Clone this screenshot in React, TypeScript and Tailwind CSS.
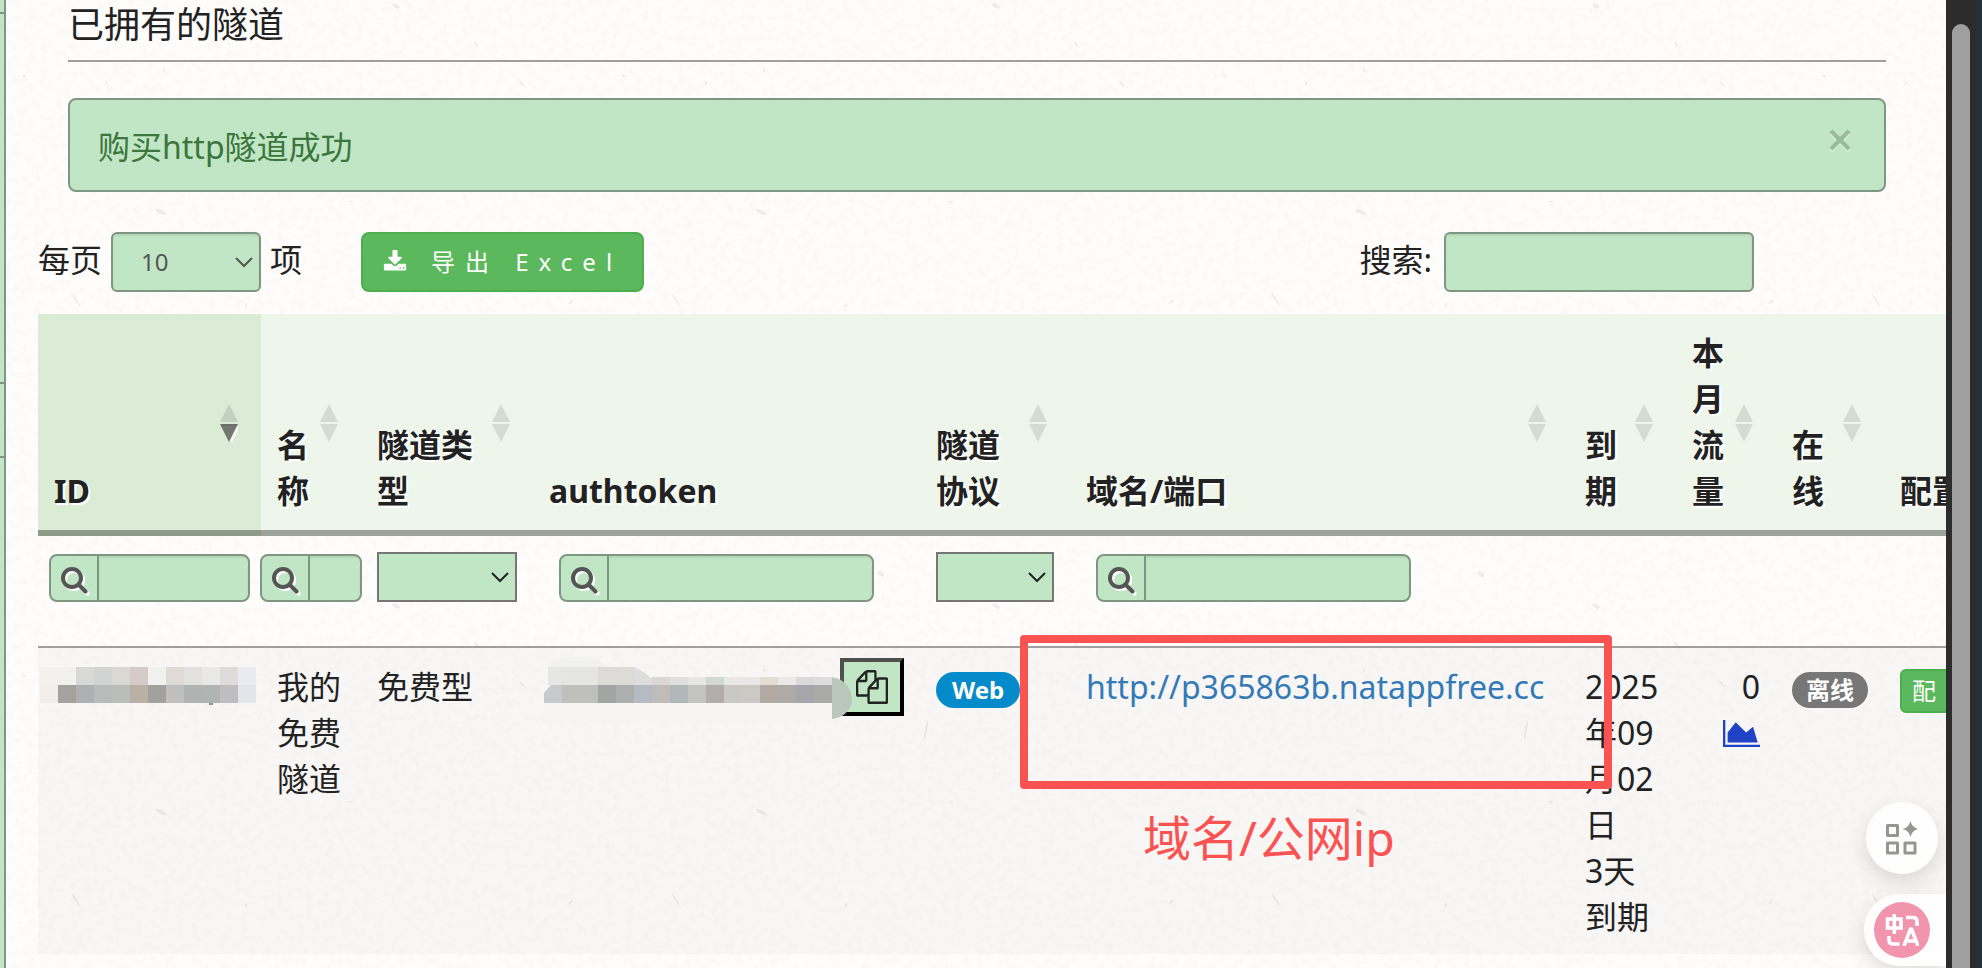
import React from 'react';
import type { ReactNode } from 'react';

const FILES = 'M1696 384q40 0 68 28t28 68v1216q0 40-28 68t-68 28h-960q-40 0-68-28t-28-68v-288h-544q-40 0-68-28t-28-68v-672q0-40 20-88t48-76l408-408q28-28 76-48t88-20h416q40 0 68 28t28 68v328q68-40 128-40h416zM1152 597l-299 299h299v-299zM512 213l-299 299h299v-299zM708 860l316-316v-416h-384v416q0 40-28 68t-68 28h-416v640h512v-256q0-40 20-88t48-76zM1664 1664v-1152h-384v416q0 40-28 68t-68 28h-416v640h896z';
const DOWNLOAD = 'M1344 1344q0-26-19-45t-45-19-45 19-19 45 19 45 45 19 45-19 19-45zM1600 1344q0-26-19-45t-45-19-45 19-19 45 19 45 45 19 45-19 19-45zM1728 1120v320q0 40-28 68t-68 28h-1472q-40 0-68-28t-28-68v-320q0-40 28-68t68-28h465l135 136q58 56 136 56t136-56l136-136h464q40 0 68 28t28 68zM1403 551q17 41-14 70l-448 448q-18 19-45 19t-45-19l-448-448q-31-29-14-70 17-39 59-39h256v-448q0-26 19-45t45-19h256q26 0 45 19t19 45v448h256q42 0 59 39z';

const idTop = ['#f2f1ee', '#f1f1ee', '#d8d9d7', '#d2d3d3', '#dad8d3', '#d5cbc9', '#f1f1f0', '#dedbd6', '#e2e1df', '#e9e9e8', '#dddcdb', '#e9ebf0'];
const idBottom = ['#f1eeec', '#a3a29f', '#afb0b2', '#b9bbba', '#bbbdbb', '#bbb0a5', '#a2a19e', '#bfbfbf', '#b0b3b2', '#b0b5b3', '#bebec0', '#e4e5ea'];
const tokenTop = ['#dad7d4', '#e0e0df', '#e7e7e6', '#d2d8d2', '#e9e8e6', '#eae8e6', '#e5dcd4', '#eaeae8', '#d9d8db', '#dcdcde'];
const tokenBottom = ['#c8c9cb', '#bfbfbc', '#bfbfbd', '#a3a5a4', '#adafae', '#b5bac3', '#c0bcba', '#b1b8ba', '#c3c3c2', '#b2adab', '#cac8c5', '#ccc9c5', '#b3a9a3', '#b0aaa7', '#a7a6ad', '#aaaaa8'];

// one 600px tile of paper fibres
const flecks = [
  [18, 76, 2, 1, 20], [158, 70, 2, 1, 70], [100, 83, 2, 1, 110], [390, 6, 4, 2, 30], [470, 44, 3, 1, 60], [516, 84, 4, 1, 50],
  [155, 212, 6, 2, 25], [345, 202, 2, 1, 0], [70, 300, 7, 1, 55], [565, 302, 3, 1, 140], [240, 305, 2, 1, 80], [560, 440, 3, 1, 60],
  [126, 413, 7, 3, 5], [172, 404, 3, 2, 40], [158, 451, 6, 1, 35], [440, 470, 2, 1, 0], [380, 515, 14, 1, 28], [275, 574, 4, 2, 35],
  [470, 380, 14, 1, 165], [40, 520, 6, 1, 125], [320, 130, 10, 1, 100],
];

function Paper() {
  return (
    <svg className="pointer-events-none absolute inset-0 h-full w-full" aria-hidden="true">
      <filter id="grain">
        <feTurbulence type="fractalNoise" baseFrequency="0.14" numOctaves="4" seed="8" />
        <feColorMatrix values="0 0 0 0 .45  0 0 0 0 .43  0 0 0 0 .4  .18 0 0 0 -.07" />
      </filter>
      <pattern id="flecks" width="600" height="600" patternUnits="userSpaceOnUse">
        {flecks.map(([x, y, rx, ry, r], i) => (
          <ellipse key={i} rx={rx} ry={ry} transform={`translate(${x} ${y}) rotate(${r})`} fill="#8d8878" opacity=".12" />
        ))}
      </pattern>
      <rect width="100%" height="100%" filter="url(#grain)" opacity=".6" />
      <rect width="100%" height="100%" fill="url(#flecks)" />
    </svg>
  );
}

function SortIcon({ desc = false }: { desc?: boolean }) {
  return (
    <svg className="absolute right-[23px] bottom-[88px]" width="18" height="38" viewBox="0 0 18 38" aria-hidden="true">
      <path d="M9 0 18 18H0z" fill="#000" opacity=".11" />
      {desc && <path d="M2 22h18L11 40z" fill="#fff" opacity=".7" />}
      <path d="M0 20h18L9 38z" fill="#000" opacity={desc ? '.52' : '.11'} />
    </svg>
  );
}

function Head({ children, sort, desc }: { children: ReactNode; sort?: boolean; desc?: boolean }) {
  return (
    <th className={'relative border-b-6 px-4 py-4 text-left align-bottom font-bold [text-shadow:2px_2px_0_#fff] ' + (desc ? 'border-[#8e9a8a] bg-[#dbecd6]' : 'border-[#9da399] bg-[#eef6ec]')}>
      {children}
      {sort && <SortIcon desc={desc} />}
    </th>
  );
}

function FilterBox({ label }: { label: string }) {
  return (
    <label className="flex h-12 w-full overflow-hidden rounded-lg border-2 border-[#7f9682] bg-[#c1e6c5]">
      <span className="flex w-12 shrink-0 items-center justify-center border-r-2 border-[#7f9682] pt-1">
        <svg className="drop-shadow-[2px_2px_0_#fff]" width="28" height="28" viewBox="0 0 28 28" fill="none" stroke="#555" strokeWidth="4" aria-hidden="true">
          <circle cx="12" cy="12" r="9" />
          <path d="m18.500 18.500 7 7" strokeLinecap="round" />
        </svg>
      </span>
      <input type="text" aria-label={label} className="w-full min-w-0 bg-transparent px-2 text-2xl outline-none shadow-[inset_0_2px_2px_rgba(0,0,0,.075)]" />
    </label>
  );
}

function Chevron({ className }: { className: string }) {
  return (
    <svg className={'pointer-events-none absolute ' + className} width="18" height="11" viewBox="0 0 18 11" fill="none" stroke="currentColor" strokeWidth="2" aria-hidden="true">
      <path d="m1 1 8 8 8-8" />
    </svg>
  );
}

function FilterSelect({ label }: { label: string }) {
  return (
    <div className="relative">
      <select aria-label={label} className="block h-[50px] w-full appearance-none border-2 border-[#767676] bg-[#c1e6c5] outline-none" />
      <Chevron className="right-2 top-5" />
    </div>
  );
}

function IdMosaic() {
  return (
    <svg className="-ml-[14px] mt-[3px] block" width="216" height="38" aria-hidden="true">
      {idTop.map((c, i) => <rect key={i} x={i * 18} width="18" height="18" fill={c} />)}
      {idBottom.map((c, i) => <rect key={i} x={i * 18} y="18" width="18" height="18" fill={c} />)}
      <rect x="169" y="36" width="4" height="2" fill="#8a8f96" />
    </svg>
  );
}

function TokenMosaic() {
  return (
    <svg className="absolute left-[11px] top-[9px]" width="310" height="66" aria-hidden="true">
      <path d="M4 10Q10 0 20 0h24q8 0 18 10z" fill="#f1f1ef" />
      <rect y="46" width="290" height="20" fill="#f6f5f3" />
      <path d="M4 10h14v18H4z" fill="#e6e6e5" />
      <path d="M18 10h36v18H18z" fill="#e5e5e3" />
      <path d="M54 10h36v18H54z" fill="#dcdbd8" />
      <path d="M90 10q10 4 18 12v6H90z" fill="#dcdedd" />
      {tokenTop.map((c, i) => <rect key={i} x={108 + i * 18} y="20" width="18" height="8" fill={c} />)}
      {tokenBottom.map((c, i) => i > 0 && <rect key={i} x={i * 18} y="28" width="18" height="18" fill={c} />)}
      <path d="M7 28h11v18H0V36z" fill="#c8c9cb" />
      <path d="M288 20q20 4 20 25-4 15-20 17z" fill="#bcc7bb" />
    </svg>
  );
}

export default function App() {
  return (
    <div className="flex h-screen overflow-hidden bg-[#fefdfc] font-['Noto_Sans','Noto_Sans_CJK_SC',sans-serif] text-[32px] leading-[46px] text-[#222]">
      <aside className="flex w-1.5 shrink-0 flex-col border-r-2 border-[#7f9682] bg-[#c1e6c5]">
        <div className="h-3.5 border-b-2 border-[#7f9682]" />
        <div className="h-[370px] border-b-2 border-[#7f9682]" />
        <div className="h-[74px] border-b-2 border-[#7f9682]" />
      </aside>

      <main className="relative min-w-0 flex-1 overflow-hidden">
        <Paper />
        <div className="relative pl-8">
          <div className="ml-[30px] mr-[60px]">
            <h1 className="h-[62px] border-b-2 border-[#a09f9d] text-4xl leading-[50px]">已拥有的隧道</h1>
            <div role="alert" className="mt-9 flex h-[94px] items-center justify-between rounded-lg border-2 border-[#7f9682] bg-[#c1e6c5] pl-7 pr-8 pt-1 text-[#3c763d]">
              <span>购买http隧道成功</span>
              <button type="button" aria-label="关闭" className="mb-3.5 text-[#9bb99f]">
                <svg className="drop-shadow-[0_2px_0_#d4efd8]" width="24" height="24" viewBox="0 0 24 24" stroke="currentColor" strokeWidth="4" aria-hidden="true">
                  <path d="m3 3 18 18M21 3 3 21" />
                </svg>
              </button>
            </div>
          </div>

          <div className="mt-10 flex h-[60px] items-center">
            <label className="pb-1" htmlFor="page-size">每页</label>
            <div className="relative mx-[9px] text-[#555]">
              <select id="page-size" className="block h-[60px] w-[150px] appearance-none rounded-md border-2 border-[#7f9682] bg-[#c1e6c5] pl-7 text-2xl shadow-[inset_0_2px_2px_rgba(0,0,0,.075)]">
                <option>10</option>
              </select>
              <Chevron className="right-2 top-[25px]" />
            </div>
            <span className="pb-1">项</span>
            <button type="button" className="ml-[59px] flex h-[60px] items-center whitespace-pre rounded-lg border-2 border-[#4cae4c] bg-[#5cb85c] px-5 text-2xl tracking-[10px] text-white">
              <svg width="24" height="24" viewBox="0 0 1792 1792" fill="currentColor" aria-hidden="true"><path d={DOWNLOAD} /></svg>
              <span className="ml-6">导出 Excel</span>
            </button>
            <div className="ml-auto mr-[192px] flex items-center gap-3">
              <label className="pb-1" htmlFor="search">搜索:</label>
              <input id="search" type="search" className="h-[60px] w-[310px] rounded-md border-2 border-[#7f9682] bg-[#c1e6c5] px-5 shadow-[inset_0_2px_2px_rgba(0,0,0,.075)]" />
            </div>
          </div>

          <div className="mt-[22px] overflow-hidden">
            <table className="w-[2060px] table-fixed border-separate border-spacing-0">
              <colgroup>
                <col className="w-[223px]" />
                <col className="w-[100px]" />
                <col className="w-[172px]" />
                <col className="w-[387px]" />
                <col className="w-[150px]" />
                <col className="w-[499px]" />
                <col className="w-[107px]" />
                <col className="w-[100px]" />
                <col className="w-[108px]" />
                <col />
              </colgroup>
              <thead>
                <tr>
                  <Head sort desc>ID</Head>
                  <Head sort>名<br />称</Head>
                  <Head sort>隧道类<br />型</Head>
                  <Head>authtoken</Head>
                  <Head sort>隧道<br />协议</Head>
                  <Head sort>域名/端口</Head>
                  <Head sort>到<br />期</Head>
                  <Head sort>本<br />月<br />流<br />量</Head>
                  <Head sort>在<br />线</Head>
                  <Head>配置</Head>
                </tr>
                <tr className="h-[112px] align-top [&>td]:border-b-2 [&>td]:border-[#a09f9d] [&>td]:pt-[18px]">
                  <td className="px-[11px]"><FilterBox label="ID" /></td>
                  <td><div className="-mx-px"><FilterBox label="名称" /></div></td>
                  <td className="px-4"><div className="-mt-0.5"><FilterSelect label="隧道类型" /></div></td>
                  <td className="pl-[26px] pr-[46px]"><FilterBox label="authtoken" /></td>
                  <td className="px-4"><div className="-mt-0.5"><FilterSelect label="隧道协议" /></div></td>
                  <td className="pl-[26px]"><div className="w-[315px]"><FilterBox label="域名/端口" /></div></td>
                  <td />
                  <td />
                  <td />
                  <td />
                </tr>
              </thead>
              <tbody>
                <tr className="bg-black/[.025] align-top [&>td]:px-4 [&>td]:pt-4 [&>td]:pb-3.5">
                  <td><IdMosaic /></td>
                  <td>我的<br />免费<br />隧道</td>
                  <td>免费型</td>
                  <td className="relative">
                    <button type="button" aria-label="复制" className="-mt-1.5 ml-auto flex h-[58px] w-16 items-center justify-center border-4 border-b-black border-r-black border-l-[#4f4f4f] border-t-[#4f4f4f] bg-[#c1e6c5]">
                      <svg width="32" height="34" viewBox="0 0 1792 1792" preserveAspectRatio="none" fill="currentColor" aria-hidden="true"><path d={FILES} /></svg>
                    </button>
                    <TokenMosaic />
                  </td>
                  <td><span className="mt-2 flex h-9 w-fit items-center rounded-full bg-[#068bca] px-4 text-2xl font-bold text-white">Web</span></td>
                  <td className="relative">
                    <a href="http://p365863b.natappfree.cc" className="text-[#337ab7]">http://p365863b.natappfree.cc</a>
                    <div className="absolute -left-[50px] -right-[43px] -top-[13px] z-10 h-[154px] rounded border-8 border-[#fb5252]" />
                    <div className="absolute left-[73px] top-[154px] whitespace-nowrap text-5xl leading-[72px] text-[#fb5252]">域名/公网ip</div>
                  </td>
                  <td className="whitespace-nowrap">2025<br />年09<br />月02<br />日<br />3天<br />到期</td>
                  <td className="text-right">
                    0
                    <a href="#traffic" aria-label="流量图" className="mt-2.5 flex justify-end text-[#2042c4]">
                      <svg width="37" height="27" viewBox="0 128 2048 1536" preserveAspectRatio="none" fill="currentColor" aria-hidden="true">
                        <path d="M2048 1536v128H0V128h128v1408zM1664 512l256 896H256V832l448-576 576 576z" />
                      </svg>
                    </a>
                  </td>
                  <td><span className="mt-2 flex h-9 w-fit items-center whitespace-nowrap rounded-full bg-[#777] px-3.5 text-2xl font-bold text-white">离线</span></td>
                  <td><button type="button" className="mt-[5px] flex h-11 w-20 items-center rounded-md border-2 border-[#4cae4c] bg-[#5cb85c] px-2.5 text-2xl text-white">配</button></td>
                </tr>
              </tbody>
            </table>
          </div>
        </div>

        <div className="absolute bottom-0.5 right-0 z-20 flex flex-col items-end gap-5">
          <button type="button" aria-label="工具" className="mr-2 flex h-[72px] w-[72px] items-center justify-center rounded-full bg-white/85 shadow-[0_8px_20px_rgba(0,0,0,.12)]">
            <svg width="32" height="34" viewBox="0 0 32 34" fill="none" stroke="#959593" strokeWidth="3" strokeLinejoin="round" aria-hidden="true">
              <rect x="1.500" y="4.500" width="10" height="10" />
              <rect x="1.500" y="22" width="10" height="10" />
              <rect x="19" y="22" width="10" height="10" />
              <path d="M24.500 0q1.500 6.500 8 8-6.500 1.500-8 8-1.500-6.500-8-8 6.500-1.500 8-8z" fill="#959593" stroke="none" />
            </svg>
          </button>
          <button type="button" aria-label="翻译" className="flex h-[72px] w-[82px] items-center rounded-l-full bg-white/85 pl-2.5 shadow-[0_8px_20px_rgba(0,0,0,.12)]">
            <span className="flex h-14 w-14 items-center justify-center rounded-full bg-[#f095ad]">
              <svg width="34" height="32" viewBox="0 0 34 32" fill="none" stroke="#fff" strokeWidth="3.600" aria-hidden="true">
                <path d="M2.500 5h13.500v9H2.500zM9.300 0v20" />
                <path d="M21 3.500h7q4 0 4 4V12M4 22v4q0 4 4 4h6.500" />
                <path d="m19 32 6.500-17h1L33 32M20.500 27h10" strokeLinejoin="round" />
              </svg>
            </span>
          </button>
        </div>
      </main>

      <div className="w-[30px] shrink-0 bg-[#2c2c2c] px-1.5 pt-6">
        <div className="h-full rounded-t-full bg-[#9f9f9f]" />
      </div>
      <div className="w-1.5 shrink-0 bg-[#25303d]" />
    </div>
  );
}
